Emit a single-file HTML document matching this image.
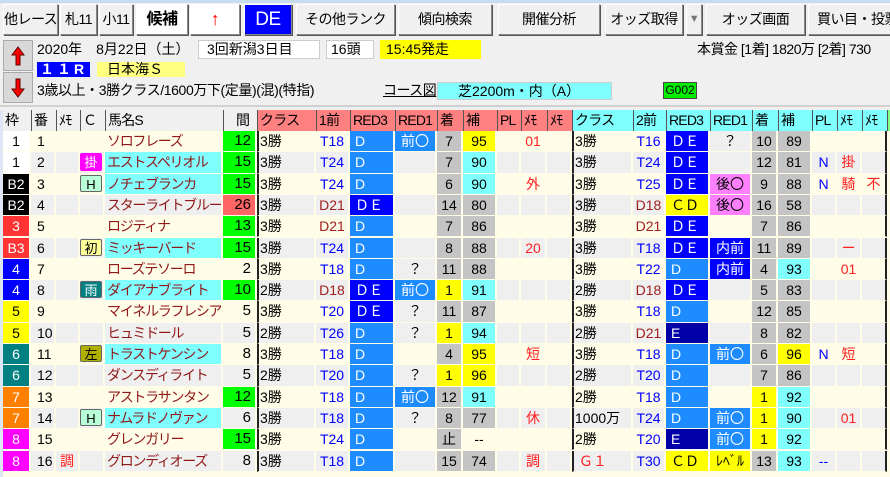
<!DOCTYPE html>
<html><head><meta charset="utf-8">
<style>
*{box-sizing:border-box;margin:0;padding:0}
body{width:890px;height:477px;overflow:hidden;background:#f0f0f0;font-family:"Liberation Sans","Noto Sans CJK JP",sans-serif;font-size:14px;color:#000;position:relative}
.a{position:absolute;white-space:nowrap}
.btn{position:absolute;top:4px;height:31px;background:#f0f0f0;border:1px solid #fff;border-right:1px solid #888;border-bottom:1px solid #888;box-shadow:1px 1px 0 #555;text-align:center;line-height:29px;font-size:14px;letter-spacing:-0.5px;overflow:hidden;white-space:nowrap}
.wbox{background:#fff;border:1px solid #ccc}
.r{position:absolute;left:3px;height:21.3px;display:flex}
.r>span{display:block;height:100%;border-right:2px solid #fffce8;border-bottom:1px solid #fffce8;line-height:20px;white-space:nowrap;overflow:hidden;text-align:center}
.r>span:nth-child(1){width:28px}
.r>span:nth-child(2){width:25px;text-align:left;padding-left:6px}
.r>span:nth-child(3){width:24px}
.r>span:nth-child(4){width:25px;padding:1px 1px 2px 0}
.r>span:nth-child(5){width:118px;text-align:left;padding-left:2px;color:#901818;letter-spacing:-1.3px}
.r>span:nth-child(6){width:34px;text-align:right;padding-right:4px;font-size:15px}
.r>span:nth-child(7){width:59px;border-left:2px solid #222;text-align:left;padding-left:1px}
.r>span:nth-child(8){width:34px}
.r>span:nth-child(9){width:45px;text-align:left;padding-left:5px}
.r>span:nth-child(10){width:42px}
.r>span:nth-child(11){width:26px}
.r>span:nth-child(12){width:34px}
.r>span:nth-child(13){width:24px}
.r>span:nth-child(14){width:26px}
.r>span:nth-child(15){width:25px}
.r>span:nth-child(16){width:61px;border-left:2px solid #222;text-align:left;padding-left:1px}
.r>span:nth-child(17){width:33px}
.r>span:nth-child(18){width:44px;text-align:left;padding-left:5px}
.r>span:nth-child(19){width:42px}
.r>span:nth-child(20){width:26px}
.r>span:nth-child(21){width:34px}
.r>span:nth-child(22){width:25px}
.r>span:nth-child(23){width:25px}
.r>span:nth-child(24){width:25px;border-right:2px solid #222}
.e>span{background:#efefef}
.r>span.g{background:#00ff00}.r>span.c{background:#80ffff}.r>span.y{background:#ffff00}
.r>span.gr{background:#c4c4c4}.r>span.rd{background:#ff6666}
.r>span.b1{background:#1e8cff;color:#fff}.r>span.b2{background:#0000ff;color:#fff}.r>span.b3{background:#0000a8;color:#fff}
.r>span.mg{background:#ff80ff}.r>span.w{background:#fff}.r>span.k{background:#000;color:#fff}
.r>span.red{background:#ff3333;color:#fff}.r>span.blu{background:#0000ff;color:#fff}
.r>span.yl{background:#ffff00}.r>span.tl{background:#008080;color:#fff}.r>span.or{background:#ff8000;color:#fff}.r>span.mw{background:#ff00ff;color:#fff}
.tb{color:#0000ff}.tr{color:#ff2020}.tbr{color:#a02020}
.r>span.ev{background:#efefef}
i{font-style:normal;display:block;height:100%;border-radius:2px;line-height:17px;text-align:center;font-size:13px;border:1px solid #666}
.h{position:absolute;left:3px;top:110px;height:21px;display:flex;font-size:14px}
.h>span{display:block;height:21px;border-left:1px solid #555;line-height:20px;padding-left:2px;white-space:nowrap;overflow:hidden;letter-spacing:-0.8px}
</style></head><body>
<div class="a" style="left:0;top:0;width:890px;height:3px;background:#c8dcf0"></div>

<div class="btn" style="left:3px;width:55px">他レース</div>
<div class="btn" style="left:60px;width:37px">札11</div>
<div class="btn" style="left:99px;width:34px">小11</div>
<div class="btn" style="left:136px;width:52px;background:#fff;font-weight:bold;font-size:16px">候補</div>
<div class="btn" style="left:190px;width:50px;background:#fff;color:#f00;font-weight:bold;font-size:18px">↑</div>
<div class="btn" style="left:244px;width:48px;background:#0000ff;color:#fff;font-size:19px">DE</div>
<div class="btn" style="left:296px;width:99px">その他ランク</div>
<div class="btn" style="left:398px;width:94px">傾向検索</div>
<div class="btn" style="left:498px;width:102px">開催分析</div>
<div class="btn" style="left:605px;width:78px">オッズ取得</div>
<div class="btn" style="left:686px;width:16px;color:#777;font-size:11px">▼</div>
<div class="btn" style="left:706px;width:99px">オッズ画面</div>
<div class="btn" style="left:808px;width:90px;text-align:left;padding-left:8px">買い目・投票</div>

<div class="a" style="left:3px;top:40px;width:30px;height:31px;background:#d8d8d8;border:1px solid #aaa"><svg width="28" height="29" viewBox="0 0 28 29"><path d="M14 6 L20 14 L16 14 L16 24 L12 24 L12 14 L8 14 Z" fill="#f00" stroke="#600" stroke-width="1"/></svg></div>
<div class="a" style="left:3px;top:72px;width:30px;height:31px;background:#d8d8d8;border:1px solid #aaa"><svg width="28" height="29" viewBox="0 0 28 29"><path d="M14 24 L20 16 L16 16 L16 6 L12 6 L12 16 L8 16 Z" fill="#f00" stroke="#600" stroke-width="1"/></svg></div>
<div class="a" style="left:37px;top:39px;line-height:20px">2020年　8月22日（土）</div>
<div class="a wbox" style="left:198px;top:40px;width:122px;height:19px;line-height:17px;padding-left:8px">3回新潟3日目</div>
<div class="a wbox" style="left:326px;top:40px;width:48px;height:19px;line-height:17px;padding-left:4px">16頭</div>
<div class="a" style="left:380px;top:40px;width:101px;height:19px;line-height:19px;padding-left:6px;background:#ffff00">15:45発走</div>
<div class="a" style="left:697px;top:39px;line-height:20px;letter-spacing:-0.5px">本賞金 [1着] 1820万 [2着] 730</div>
<div class="a" style="left:37px;top:62px;width:53px;height:15px;background:#0000ff;color:#fff;line-height:15px;padding-left:3px;font-weight:bold;letter-spacing:3px">１１R</div>
<div class="a" style="left:97px;top:62px;width:88px;height:15px;background:#ffff80;line-height:15px;padding-left:10px">日本海Ｓ</div>
<div class="a" style="left:37px;top:80px;line-height:20px;letter-spacing:-0.4px">3歳以上・3勝クラス/1600万下(定量)(混)(特指)</div>
<div class="a" style="left:383px;top:80px;line-height:20px;text-decoration:underline;letter-spacing:-0.5px">コース図</div>
<div class="a" style="left:437px;top:82px;width:175px;height:18px;background:#80ffff;border:1px solid #ccc;line-height:16px;padding-left:20px">芝2200m・内（A）</div>
<div class="a" style="left:663px;top:82px;width:34px;height:17px;background:#00ee00;border:1px solid #444;line-height:15px;font-size:12px;text-align:center">G002</div>
<div class="a" style="left:0;top:105px;width:890px;height:2px;background:#d0d0d0"></div>

<div class="h">
<span style="width:28px;border-left:none">枠</span><span style="width:25px">番</span><span style="width:24px">ﾒﾓ</span><span style="width:25px">Ｃ</span><span style="width:118px">馬名S</span><span style="width:34px;padding-left:12px">間</span>
<span style="width:59px;background:#ff8080">クラス</span><span style="width:34px;background:#ff8080">1前</span><span style="width:45px;background:#ff8080">RED3</span><span style="width:42px;background:#ff8080">RED1</span><span style="width:26px;background:#ff8080">着</span><span style="width:34px;background:#ff8080">補</span><span style="width:24px;background:#ff8080">PL</span><span style="width:26px;background:#ff8080">ﾒﾓ</span><span style="width:25px;background:#ff8080">ﾒﾓ</span>
<span style="width:61px;background:#80ffff">クラス</span><span style="width:33px;background:#80ffff">2前</span><span style="width:44px;background:#80ffff">RED3</span><span style="width:42px;background:#80ffff">RED1</span><span style="width:26px;background:#80ffff">着</span><span style="width:34px;background:#80ffff">補</span><span style="width:25px;background:#80ffff">PL</span><span style="width:25px;background:#80ffff">ﾒﾓ</span><span style="width:25px;background:#80ffff">ﾒﾓ</span><span style="width:6px;background:#80ff80"></span>
</div>
<div class="a" style="left:3px;top:131px;width:887px;height:346px;background:#fffce8"></div>

<div class="r o" style="top:131px"><span class="w">1</span><span>1</span><span></span><span></span><span>ソロフレーズ</span><span class="g">12</span><span>3勝</span><span class="tb">T18</span><span class="b1">D</span><span class="b1">前〇</span><span class="gr">7</span><span class="y">95</span><span></span><span class="tr">01</span><span></span><span>3勝</span><span class="tb">T16</span><span class="b2">ＤＥ</span><span class="ev">？</span><span class="gr">10</span><span class="gr">89</span><span></span><span></span><span></span></div>
<div class="r e" style="top:152.3px"><span class="w">1</span><span>2</span><span></span><span><i style="background:#ff00ff;color:#fff;border-color:#ff00ff">掛</i></span><span class="c">エストスペリオル</span><span class="g">15</span><span>3勝</span><span class="tb">T24</span><span class="b1">D</span><span></span><span class="gr">7</span><span class="c">90</span><span></span><span></span><span></span><span>3勝</span><span class="tb">T24</span><span class="b2">ＤＥ</span><span></span><span class="gr">12</span><span class="gr">81</span><span class="tb">N</span><span class="tr">掛</span><span></span></div>
<div class="r o" style="top:173.6px"><span class="k">B2</span><span>3</span><span></span><span><i style="background:#b8ffd8">H</i></span><span class="c">ノチェブランカ</span><span class="g">15</span><span>3勝</span><span class="tb">T24</span><span class="b1">D</span><span></span><span class="gr">6</span><span class="c">90</span><span></span><span class="tr">外</span><span></span><span>3勝</span><span class="tb">T25</span><span class="b2">ＤＥ</span><span class="mg">後〇</span><span class="gr">9</span><span class="gr">88</span><span class="tb">N</span><span class="tr">騎</span><span class="tr">不</span></div>
<div class="r e" style="top:194.9px"><span class="k">B2</span><span>4</span><span></span><span></span><span>スターライトブルー</span><span class="rd">26</span><span>3勝</span><span class="tbr">D21</span><span class="b2">ＤＥ</span><span></span><span class="gr">14</span><span class="gr">80</span><span></span><span></span><span></span><span>3勝</span><span class="tbr">D18</span><span class="y">ＣＤ</span><span class="mg">後〇</span><span class="gr">16</span><span class="gr">58</span><span></span><span></span><span></span></div>
<div class="r o" style="top:216.2px"><span class="red">3</span><span>5</span><span></span><span></span><span>ロジティナ</span><span class="g">13</span><span>3勝</span><span class="tbr">D21</span><span class="b1">D</span><span></span><span class="gr">7</span><span class="gr">86</span><span></span><span></span><span></span><span>3勝</span><span class="tbr">D21</span><span class="b2">ＤＥ</span><span></span><span class="gr">7</span><span class="gr">86</span><span></span><span></span><span></span></div>
<div class="r e" style="top:237.5px"><span class="red">B3</span><span>6</span><span></span><span><i style="background:#ffff99">初</i></span><span class="c">ミッキーバード</span><span class="g">15</span><span>3勝</span><span class="tb">T24</span><span class="b1">D</span><span></span><span class="gr">8</span><span class="gr">88</span><span></span><span class="tr">20</span><span></span><span>3勝</span><span class="tb">T18</span><span class="b2">ＤＥ</span><span class="b2">内前</span><span class="gr">11</span><span class="gr">89</span><span></span><span class="tr">ー</span><span></span></div>
<div class="r o" style="top:258.8px"><span class="blu">4</span><span>7</span><span></span><span></span><span>ローズテソーロ</span><span>2</span><span>3勝</span><span class="tb">T18</span><span class="b1">D</span><span class="ev">？</span><span class="gr">11</span><span class="gr">88</span><span></span><span></span><span></span><span>3勝</span><span class="tb">T22</span><span class="b1">D</span><span class="b2">内前</span><span class="gr">4</span><span class="c">93</span><span></span><span class="tr">01</span><span></span></div>
<div class="r e" style="top:280.1px"><span class="blu">4</span><span>8</span><span></span><span><i style="background:#008080;color:#fff">雨</i></span><span class="c">ダイアナブライト</span><span class="g">10</span><span>2勝</span><span class="tbr">D18</span><span class="b2">ＤＥ</span><span class="b1">前〇</span><span class="y">1</span><span class="c">91</span><span></span><span></span><span></span><span>2勝</span><span class="tbr">D18</span><span class="b2">ＤＥ</span><span></span><span class="gr">5</span><span class="gr">83</span><span></span><span></span><span></span></div>
<div class="r o" style="top:301.4px"><span class="yl">5</span><span>9</span><span></span><span></span><span>マイネルラフレシア</span><span>5</span><span>3勝</span><span class="tb">T20</span><span class="b2">ＤＥ</span><span class="ev">？</span><span class="gr">11</span><span class="gr">87</span><span></span><span></span><span></span><span>3勝</span><span class="tb">T18</span><span class="b1">D</span><span></span><span class="gr">12</span><span class="gr">85</span><span></span><span></span><span></span></div>
<div class="r e" style="top:322.7px"><span class="yl">5</span><span>10</span><span></span><span></span><span>ヒュミドール</span><span>5</span><span>2勝</span><span class="tb">T26</span><span class="b1">D</span><span>？</span><span class="y">1</span><span class="c">94</span><span></span><span></span><span></span><span>2勝</span><span class="tbr">D21</span><span class="b3">E</span><span></span><span class="gr">8</span><span class="gr">82</span><span></span><span></span><span></span></div>
<div class="r o" style="top:344px"><span class="tl">6</span><span>11</span><span></span><span><i style="background:#b0b000">左</i></span><span class="c">トラストケンシン</span><span>8</span><span>3勝</span><span class="tb">T18</span><span class="b1">D</span><span></span><span class="gr">4</span><span class="y">95</span><span></span><span class="tr">短</span><span></span><span>3勝</span><span class="tb">T18</span><span class="b1">D</span><span class="b1">前〇</span><span class="gr">6</span><span class="y">96</span><span class="tb">N</span><span class="tr">短</span><span></span></div>
<div class="r e" style="top:365.3px"><span class="tl">6</span><span>12</span><span></span><span></span><span>ダンスディライト</span><span>5</span><span>2勝</span><span class="tb">T20</span><span class="b1">D</span><span>？</span><span class="y">1</span><span class="y">96</span><span></span><span></span><span></span><span>2勝</span><span class="tb">T20</span><span class="b1">D</span><span></span><span class="gr">7</span><span class="gr">86</span><span></span><span></span><span></span></div>
<div class="r o" style="top:386.6px"><span class="or">7</span><span>13</span><span></span><span></span><span>アストラサンタン</span><span class="g">12</span><span>3勝</span><span class="tb">T18</span><span class="b1">D</span><span class="b1">前〇</span><span class="gr">12</span><span class="c">91</span><span></span><span></span><span></span><span>2勝</span><span class="tb">T18</span><span class="b1">D</span><span></span><span class="y">1</span><span class="c">92</span><span></span><span></span><span></span></div>
<div class="r e" style="top:407.9px"><span class="or">7</span><span>14</span><span></span><span><i style="background:#b8ffd8">H</i></span><span class="c">ナムラドノヴァン</span><span>6</span><span>3勝</span><span class="tb">T18</span><span class="b1">D</span><span>？</span><span class="gr">8</span><span class="gr">77</span><span></span><span class="tr">休</span><span></span><span>1000万</span><span class="tb">T24</span><span class="b1">D</span><span class="b1">前〇</span><span class="y">1</span><span class="c">90</span><span></span><span class="tr">01</span><span></span></div>
<div class="r o" style="top:429.2px"><span class="mw">8</span><span>15</span><span></span><span></span><span>グレンガリー</span><span class="g">15</span><span>3勝</span><span class="tb">T24</span><span class="b1">D</span><span></span><span class="gr">止</span><span>--</span><span></span><span></span><span></span><span>2勝</span><span class="tb">T20</span><span class="b3">E</span><span class="b1">前〇</span><span class="y">1</span><span class="c">92</span><span></span><span></span><span></span></div>
<div class="r e" style="top:450.5px"><span class="mw">8</span><span>16</span><span class="tr">調</span><span></span><span>グロンディオーズ</span><span>8</span><span>3勝</span><span class="tb">T18</span><span class="b1">D</span><span></span><span class="gr">15</span><span class="gr">74</span><span></span><span class="tr">調</span><span></span><span class="tr">&nbsp;Ｇ１</span><span class="tb">T30</span><span class="y">ＣＤ</span><span class="y">ﾚﾍﾞﾙ</span><span class="gr">13</span><span class="c">93</span><span class="tb">--</span><span></span><span></span></div>
<div class="a" style="left:0;top:110px;width:3px;height:367px;background:#dde8f4"></div>
</body></html>
